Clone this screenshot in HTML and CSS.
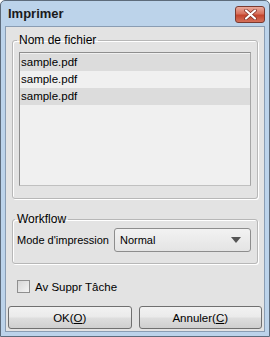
FILE: index.html
```html
<!DOCTYPE html>
<html lang="fr">
<head>
  <meta charset="UTF-8" />
  <title>Imprimer</title>
  <link rel="stylesheet" href="styles.css">
</head>
<body>
  <div class="window">
    <div class="titlebar">
      <span class="title">Imprimer</span>
      <button class="close">
        <svg width="13" height="11" viewBox="0 0 13 11">
          <path d="M2 1.5 L11 9.5 M11 1.5 L2 9.5" stroke="#7a2a20" stroke-width="3.6" stroke-linecap="round"/>
          <path d="M2 1.5 L11 9.5 M11 1.5 L2 9.5" stroke="#fff" stroke-width="2.2" stroke-linecap="round"/>
        </svg>
      </button>
    </div>

    <div class="content">
      <fieldset class="group files">
        <legend>Nom de fichier</legend>
        <ul class="filelist">
          <li>sample.pdf</li>
          <li>sample.pdf</li>
          <li>sample.pdf</li>
        </ul>
      </fieldset>

      <fieldset class="group workflow">
        <legend>Workflow</legend>
        <div class="row">
          <label>Mode d'impression</label>
          <div class="select">
            <span>Normal</span>
            <span class="arrow"></span>
          </div>
        </div>
      </fieldset>

      <label class="check">
        <span class="box"></span>
        Av Suppr Tâche
      </label>

      <div class="buttons">
        <button class="btn">OK(<u>O</u>)</button>
        <button class="btn">Annuler(<u>C</u>)</button>
      </div>
    </div>
  </div>
</body>
</html>
```

FILE: styles.css
```css
* {
  box-sizing: border-box;
  margin: 0;
  padding: 0;
}

body {
  font-family: "Liberation Sans", Arial, sans-serif;
  font-size: 11px;
  color: #000;
  background: #fff;
}

.window {
  width: 270px;
  height: 337px;
  border: 1px solid #5d6b7b;
  border-radius: 5px 5px 0 0;
  background: #bcd3ea;
  padding: 0 4px 4px;
  display: flex;
  flex-direction: column;
}

.titlebar {
  height: 25px;
  display: flex;
  align-items: center;
  justify-content: space-between;
  padding-left: 3px;
}

.title {
  font-size: 13px;
  font-weight: bold;
  color: #1a1a1a;
}

.close {
  width: 30px;
  height: 17px;
  margin-top: 1px;
  border: 1px solid #7a3a30;
  border-radius: 3px;
  background: linear-gradient(to bottom, #e9a99b 0%, #d8705c 45%, #c4442d 55%, #d4705a 100%);
  display: flex;
  align-items: center;
  justify-content: center;
}

.content {
  flex: 1;
  background: #e3e3e3;
  border: 1px solid #8a9db3;
  padding: 6px 2px 2px;
  display: flex;
  flex-direction: column;
}

.group {
  border: 1px solid #b7b7b7;
  border-radius: 3px;
  margin: 0 4px;
  padding: 4px 6px 6px;
  box-shadow: 1px 1px 0 #fff inset, 1px 1px 0 #fff;
}

.group legend {
  padding: 0 2px;
  margin-left: -2px;
  font-size: 12px;
}

.files {
  height: 166px;
}

.filelist {
  list-style: none;
  height: 134px;
  background: #f0f0f0;
  border: 1px solid #8e8e8e;
  border-right-color: #a5a5a5;
  border-bottom-color: #c0c0c0;
  padding-top: 1px;
  margin-top: 1px;
  font-size: 11.5px;
}

.filelist li {
  height: 17px;
  line-height: 17px;
  padding-left: 1px;
  background: #dcdcdc;
}

.filelist li:nth-child(even) {
  background: #f0f0f0;
}

.workflow {
  margin-top: 13px;
  height: 52px;
  padding-top: 2px;
  padding-left: 4px;
}

.row {
  display: flex;
  align-items: center;
  gap: 5px;
  font-size: 11px;
}

.select {
  flex: 1;
  height: 24px;
  border: 1px solid #8d8d8d;
  border-radius: 3px;
  background: linear-gradient(to bottom, #f2f2f2, #e4e4e4);
  display: flex;
  align-items: center;
  justify-content: space-between;
  padding: 0 9px 0 5px;
}

.arrow {
  width: 0;
  height: 0;
  border-left: 5px solid transparent;
  border-right: 5px solid transparent;
  border-top: 6px solid #555;
}

.check {
  display: flex;
  align-items: center;
  gap: 5px;
  margin: 16px 0 0 9px;
  font-size: 11.5px;
}

.box {
  width: 13px;
  height: 13px;
  border: 1px solid #8f8f8f;
  background: linear-gradient(to bottom right, #d6d6d6, #f4f4f4);
}

.buttons {
  margin-top: auto;
  display: flex;
  gap: 7px;
}

.btn {
  flex: 1;
  height: 23px;
  font-family: inherit;
  font-size: 11.5px;
  border: 1px solid #707070;
  border-radius: 3px;
  background: linear-gradient(to bottom, #f2f2f2 0%, #ebebeb 45%, #dddddd 55%, #cfcfcf 100%);
}
```
